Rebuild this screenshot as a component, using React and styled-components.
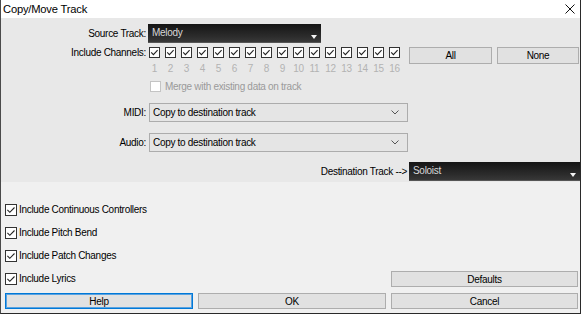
import React from "react";
import styled, { createGlobalStyle } from "styled-components";

const Global = createGlobalStyle`
  html, body { margin: 0; padding: 0; background: #ffffff; }
  * { box-sizing: border-box; }
`;

const Window = styled.div`
  width: 581px;
  height: 314px;
  display: flex;
  flex-direction: column;
  border-left: 1px solid #4a4a4a;
  border-right: 1px solid #2a2a2a;
  border-bottom: 1px solid #2a2a2a;
  font-family: "Liberation Sans", Arial, sans-serif;
  font-size: 10px;
  letter-spacing: -0.3px;
  color: #000;
  overflow: hidden;
`;

const TitleBar = styled.div`
  height: 18px;
  flex: none;
  background: #ffffff;
  display: flex;
  align-items: center;
  justify-content: space-between;
  padding: 0 5px 0 2px;
`;

const Title = styled.span`
  font-size: 11.2px;
  letter-spacing: -0.2px;
  color: #000;
`;

const UpperPanel = styled.div`
  height: 164px;
  flex: none;
  background: #e8e8e8;
  display: flex;
  flex-direction: column;
  padding-top: 6px;
`;

const Row = styled.div`
  display: flex;
  align-items: ${(p) => p.$align || "center"};
  height: ${(p) => p.$h}px;
  margin-top: ${(p) => p.$mt || 0}px;
  justify-content: ${(p) => p.$justify || "flex-start"};
`;

const Label = styled.div`
  width: ${(p) => p.$w || 145}px;
  flex: none;
  text-align: right;
  white-space: nowrap;
  line-height: 11px;
  padding-top: ${(p) => p.$pt || 0}px;
`;

const DarkCombo = styled.div`
  width: ${(p) => p.$w}px;
  height: 19px;
  margin-left: ${(p) => p.$ml || 0}px;
  flex: none;
  position: relative;
  background: linear-gradient(#151515, #2c2c2c 70%, #383838);
  border-bottom: 1px solid #555;
  color: #d8d8d8;
  padding: 3px 0 0 4px;
  line-height: 12px;
`;

const DarkArrow = styled.span`
  position: absolute;
  right: 4px;
  bottom: 3px;
  width: 0;
  height: 0;
  border-left: 3px solid transparent;
  border-right: 3px solid transparent;
  border-top: 4px solid #f4f4f4;
`;

const ChannelGrid = styled.div`
  display: flex;
  margin-left: 3px;
`;

const Channel = styled.div`
  width: 11px;
  margin-right: ${(p) => (p.$last ? 0 : 5)}px;
  display: flex;
  flex-direction: column;
  align-items: center;
`;

const ChanNum = styled.span`
  margin-top: 5px;
  color: #b3b3b3;
  font-size: 10px;
  line-height: 11px;
  white-space: nowrap;
  letter-spacing: -0.2px;
`;

const Button = styled.div`
  width: ${(p) => p.$w}px;
  height: ${(p) => p.$h || 16}px;
  margin-left: ${(p) => p.$ml || 0}px;
  flex: none;
  display: flex;
  align-items: center;
  justify-content: center;
  background: #e1e1e1;
  border: 1px solid ${(p) => (p.$focus ? "#0078d7" : "#adadad")};
  box-shadow: ${(p) => (p.$focus ? "inset 0 0 0 1px #5aa2e0" : "none")};
  color: #000;
`;

const MergeText = styled.span`
  margin-left: 4px;
  color: #9a9a9a;
`;

const Combo = styled.div`
  width: 259px;
  height: 19px;
  margin-left: 3px;
  flex: none;
  display: flex;
  align-items: center;
  justify-content: space-between;
  background: #e5e5e5;
  border: 1px solid #acacac;
  padding: 0 8px 0 3px;
`;

const LowerPanel = styled.div`
  flex: 1;
  background: #f0f0f0;
  display: flex;
  flex-direction: column;
  padding: 19px 2px 4px 4px;
`;

const OptionsArea = styled.div`
  display: flex;
  justify-content: space-between;
  align-items: flex-end;
`;

const OptionList = styled.div`
  display: flex;
  flex-direction: column;
  gap: 6px;
`;

const OptionRow = styled.label`
  display: flex;
  align-items: center;
  height: 17px;
  gap: 2px;
`;

const ButtonRow = styled.div`
  display: grid;
  grid-template-columns: 188px 188px 187px;
  column-gap: 5px;
  margin-top: 6px;
`;

const CheckBox = ({ size = 11, checked = true, disabled = false }) => (
  <svg width={size} height={size} viewBox={`0 0 ${size} ${size}`} style={{ flex: "none", display: "block" }}>
    <rect
      x="0.5"
      y="0.5"
      width={size - 1}
      height={size - 1}
      fill="#ffffff"
      stroke={disabled ? "#c4c4c4" : "#333333"}
    />
    {checked && (
      <path
        d={size === 11 ? "M2.2 5.4 L4.4 7.6 L8.6 3.2" : "M2.4 5.9 L4.8 8.3 L9.5 3.5"}
        fill="none"
        stroke="#222"
        strokeWidth="1.1"
      />
    )}
  </svg>
);

const CloseIcon = () => (
  <svg width="10" height="10" viewBox="0 0 10 10">
    <path d="M0.5 0.5 L9.5 9.5 M9.5 0.5 L0.5 9.5" stroke="#111" strokeWidth="1" />
  </svg>
);

const Chevron = () => (
  <svg width="8" height="5" viewBox="0 0 8 5">
    <path d="M0.5 0.5 L4 4 L7.5 0.5" fill="none" stroke="#555" strokeWidth="1" />
  </svg>
);

const channels = Array.from({ length: 16 }, (_, i) => i + 1);
const options = [
  "Include Continuous Controllers",
  "Include Pitch Bend",
  "Include Patch Changes",
  "Include Lyrics",
];

export default function App() {
  return (
    <>
      <Global />
      <Window>
        <TitleBar>
          <Title>Copy/Move Track</Title>
          <CloseIcon />
        </TitleBar>
        <UpperPanel>
          <Row $h={19}>
            <Label>Source Track:</Label>
            <DarkCombo $w={173} $ml={2}>
              Melody
              <DarkArrow />
            </DarkCombo>
          </Row>
          <Row $h={28} $mt={4} $align="flex-start">
            <Label>Include Channels:</Label>
            <ChannelGrid>
              {channels.map((n) => (
                <Channel key={n} $last={n === 16}>
                  <CheckBox />
                  <ChanNum>{n}</ChanNum>
                </Channel>
              ))}
            </ChannelGrid>
            <Button $w={83} $h={17} $ml={9}>All</Button>
            <Button $w={82} $h={17} $ml={5}>None</Button>
          </Row>
          <Row $h={11} $mt={6}>
            <Label />
            <span style={{ marginLeft: 4, display: "flex" }}>
              <CheckBox checked={false} disabled />
            </span>
            <MergeText>Merge with existing data on track</MergeText>
          </Row>
          <Row $h={19} $mt={11}>
            <Label>MIDI:</Label>
            <Combo>
              <span>Copy to destination track</span>
              <Chevron />
            </Combo>
          </Row>
          <Row $h={19} $mt={11}>
            <Label>Audio:</Label>
            <Combo>
              <span>Copy to destination track</span>
              <Chevron />
            </Combo>
          </Row>
          <Row $h={19} $mt={10} $justify="flex-end">
            <Label $w={200}>Destination Track --&gt;</Label>
            <DarkCombo $w={171} $ml={2}>
              Soloist
              <DarkArrow />
            </DarkCombo>
          </Row>
        </UpperPanel>
        <LowerPanel>
          <OptionsArea>
            <OptionList>
              {options.map((o) => (
                <OptionRow key={o}>
                  <CheckBox size={12} />
                  <span>{o}</span>
                </OptionRow>
              ))}
            </OptionList>
            <Button $w={187}>Defaults</Button>
          </OptionsArea>
          <ButtonRow>
            <Button $focus>Help</Button>
            <Button>OK</Button>
            <Button>Cancel</Button>
          </ButtonRow>
        </LowerPanel>
      </Window>
    </>
  );
}
